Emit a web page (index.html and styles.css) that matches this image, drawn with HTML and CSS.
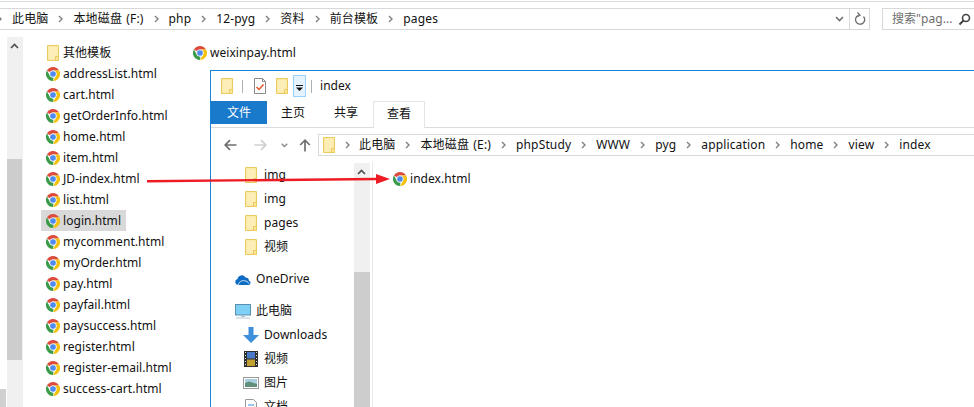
FILE: index.html
```html
<!DOCTYPE html>
<html lang="zh-CN">
<head>
<meta charset="utf-8">
<title>pages</title>
<link rel="stylesheet" href="styles.css">
</head>
<body>
<svg class="defs" width="0" height="0" aria-hidden="true">
  <symbol id="chrome" viewBox="0.5 0.5 15 15">
    <path d="M8 0.5a7.5 7.5 0 0 1 6.500 3.750H8a3.750 3.750 0 0 0-3.250 1.880L1.500 4.250A7.500 7.500 0 0 1 8 0.500z" fill="#dd4b3e"/>
    <path d="M14.500 4.250A7.500 7.500 0 0 1 8 15.500l3.250-5.630A3.750 3.750 0 0 0 8 4.250z" fill="#f4c20d"/>
    <path d="M1.500 4.250l3.250 5.620A3.750 3.750 0 0 0 8.500 11.700L8 15.500A7.500 7.500 0 0 1 1.500 4.250z" fill="#3a9b4a"/>
    <circle cx="8" cy="8" r="3.800" fill="#f2f2f2"/>
    <circle cx="8" cy="8" r="3" fill="#4d8bf0"/>
  </symbol>
  <symbol id="folder" viewBox="0 0 12 16">
    <path d="M.5.5h11v15H.5z" fill="#fde59a" stroke="#eccb5e"/>
    <path d="M1.500 1.500h9v10h-1.500v3H1.500z" fill="#fdeeb8"/>
    <path d="M8.500 15.500v-4h3" fill="none" stroke="#eccb5e"/>
  </symbol>
  <symbol id="chev" viewBox="0 0 5 8">
    <path d="M1 1l3 3-3 3" fill="none" stroke="#808080" stroke-width="1.400"/>
  </symbol>
</svg>

<div class="app">
  <div class="topline"></div>
  <div class="toolbar">
    <div class="address">
      <svg class="chev edge"><use href="#chev"/></svg>
      <span class="crumb first">此电脑</span><svg class="chev"><use href="#chev"/></svg>
      <span class="crumb">本地磁盘 (F:)</span><svg class="chev"><use href="#chev"/></svg>
      <span class="crumb">php</span><svg class="chev"><use href="#chev"/></svg>
      <span class="crumb">12-pyg</span><svg class="chev"><use href="#chev"/></svg>
      <span class="crumb">资料</span><svg class="chev"><use href="#chev"/></svg>
      <span class="crumb">前台模板</span><svg class="chev"><use href="#chev"/></svg>
      <span class="crumb">pages</span>
      <span class="address-tail">
        <svg class="drop" viewBox="0 0 9 6"><path d="M1 1l3.500 3.500L8 1" fill="none" stroke="#707070" stroke-width="1.600"/></svg>
        <span class="refresh">
          <svg viewBox="0 0 12 14" width="12" height="14"><path d="M9.500 4.500a4.600 4.600 0 1 1-5-1.200" fill="none" stroke="#6b6b6b" stroke-width="1.300"/><path d="M3.500 0.500l2.500 2.800-3 1.500" fill="none" stroke="#6b6b6b" stroke-width="1.200"/></svg>
        </span>
      </span>
    </div>
    <div class="search">
      <span>搜索"pag...</span>
      <svg viewBox="0 0 13 13" width="13" height="13"><circle cx="8" cy="5" r="3.500" fill="none" stroke="#444" stroke-width="1.600"/><path d="M5.500 7.500L1.500 11.500" stroke="#444" stroke-width="2"/></svg>
    </div>
  </div>

  <div class="main">
    <div class="sidebar-edge"></div>
    <div class="scrollbar outer">
      <svg class="scroll-up" viewBox="0 0 9 6"><path d="M1 5l3.500-3.500L8 5" fill="none" stroke="#505050" stroke-width="1.700"/></svg>
      <div class="thumb outer-thumb"></div>
    </div>
    <div class="files first-col">
      <div class="file"><svg class="ic-folder"><use href="#folder"/></svg>其他模板</div>
      <div class="file"><svg class="ic-chrome"><use href="#chrome"/></svg>addressList.html</div>
      <div class="file"><svg class="ic-chrome"><use href="#chrome"/></svg>cart.html</div>
      <div class="file"><svg class="ic-chrome"><use href="#chrome"/></svg>getOrderInfo.html</div>
      <div class="file"><svg class="ic-chrome"><use href="#chrome"/></svg>home.html</div>
      <div class="file"><svg class="ic-chrome"><use href="#chrome"/></svg>item.html</div>
      <div class="file"><svg class="ic-chrome"><use href="#chrome"/></svg>JD-index.html</div>
      <div class="file"><svg class="ic-chrome"><use href="#chrome"/></svg>list.html</div>
      <div class="file selected"><svg class="ic-chrome"><use href="#chrome"/></svg>login.html</div>
      <div class="file"><svg class="ic-chrome"><use href="#chrome"/></svg>mycomment.html</div>
      <div class="file"><svg class="ic-chrome"><use href="#chrome"/></svg>myOrder.html</div>
      <div class="file"><svg class="ic-chrome"><use href="#chrome"/></svg>pay.html</div>
      <div class="file"><svg class="ic-chrome"><use href="#chrome"/></svg>payfail.html</div>
      <div class="file"><svg class="ic-chrome"><use href="#chrome"/></svg>paysuccess.html</div>
      <div class="file"><svg class="ic-chrome"><use href="#chrome"/></svg>register.html</div>
      <div class="file"><svg class="ic-chrome"><use href="#chrome"/></svg>register-email.html</div>
      <div class="file"><svg class="ic-chrome"><use href="#chrome"/></svg>success-cart.html</div>
    </div>
    <div class="files">
      <div class="file"><svg class="ic-chrome"><use href="#chrome"/></svg>weixinpay.html</div>
    </div>
  </div>
  <div class="corner"></div>

  <section class="window">
    <div class="qat">
      <svg class="qat-folder"><use href="#folder"/></svg>
      <i class="qat-sep"></i>
      <svg class="qat-doc" viewBox="0 0 12 16"><path d="M.5.500h8l3 3v12H.5z" fill="#fff" stroke="#8a8a8a"/><path d="M8.500.500v3h3" fill="none" stroke="#8a8a8a"/><path d="M2.500 9l2.500 2.500L9.500 6.500" fill="none" stroke="#e8562a" stroke-width="1.500"/></svg>
      <svg class="qat-folder"><use href="#folder"/></svg>
      <span class="qat-btn"><svg viewBox="0 0 7 6" width="7" height="6"><path d="M0 0h7v1H0zM0 2.500h7L3.500 6z" fill="#111"/></svg></span>
      <i class="qat-sep tight"></i>
      <span class="qat-title">index</span>
    </div>
    <div class="tabs">
      <span class="tab tab-file">文件</span>
      <span class="tab tab-home">主页</span>
      <span class="tab tab-share">共享</span>
      <span class="tab tab-view">查看</span>
    </div>
    <div class="navrow">
      <svg class="nav-ic" viewBox="0 0 13 12"><path d="M12.500 6H1.500M6 1.200L1.200 6 6 10.800" fill="none" stroke="#6f6f6f" stroke-width="1.700"/></svg>
      <svg class="nav-ic fwd" viewBox="0 0 13 12"><path d="M.5 6h11M7 1.200L11.800 6 7 10.800" fill="none" stroke="#cfcfcf" stroke-width="1.700"/></svg>
      <svg class="nav-down" viewBox="0 0 7 5"><path d="M.7.700l2.800 2.800L6.300.7" fill="none" stroke="#8a8a8a" stroke-width="1.300"/></svg>
      <svg class="nav-up" viewBox="0 0 12 13"><path d="M6 12.500V1.500M1.200 6L6 1.200 10.800 6" fill="none" stroke="#6f6f6f" stroke-width="1.700"/></svg>
      <div class="inner-address">
        <svg class="addr-folder"><use href="#folder"/></svg>
        <svg class="chev gap-a"><use href="#chev"/></svg>
        <span class="crumb">此电脑</span><svg class="chev"><use href="#chev"/></svg>
        <span class="crumb">本地磁盘 (E:)</span><svg class="chev"><use href="#chev"/></svg>
        <span class="crumb">phpStudy</span><svg class="chev"><use href="#chev"/></svg>
        <span class="crumb">WWW</span><svg class="chev"><use href="#chev"/></svg>
        <span class="crumb">pyg</span><svg class="chev"><use href="#chev"/></svg>
        <span class="crumb">application</span><svg class="chev"><use href="#chev"/></svg>
        <span class="crumb">home</span><svg class="chev"><use href="#chev"/></svg>
        <span class="crumb">view</span><svg class="chev"><use href="#chev"/></svg>
        <span class="crumb">index</span>
      </div>
    </div>
    <div class="panes">
      <nav class="tree">
        <div class="node child"><svg class="ic-folder"><use href="#folder"/></svg>img</div>
        <div class="node child"><svg class="ic-folder"><use href="#folder"/></svg>img</div>
        <div class="node child"><svg class="ic-folder"><use href="#folder"/></svg>pages</div>
        <div class="node child"><svg class="ic-folder"><use href="#folder"/></svg>视频</div>
        <div class="node root">
          <svg class="ic-root" viewBox="0 0 16 12"><path d="M3 11.500a3 3 0 0 1-.5-5.900 4.300 4.300 0 0 1 8-1.600 3.500 3.500 0 0 1 3.500 3.200 2.200 2.200 0 0 1-.5 4.300z" fill="#0f6cc4"/><path d="M3 11.500c1-3 4-5 6.500-4.300 2 .5 3.500 1 4.500 3" fill="none" stroke="#fff" stroke-width=".8"/></svg>OneDrive
        </div>
        <div class="node root">
          <svg class="ic-root" viewBox="0 0 16 15"><rect x=".5" y=".5" width="15" height="10.500" fill="#7ed0f5" stroke="#5b8fae"/><path d="M6 11h4v2H6z" fill="#a9c4d4"/><path d="M1 13.500h14v1H1z" fill="#b5c7d3"/></svg>此电脑
        </div>
        <div class="node child">
          <svg class="ic-sub" viewBox="0 0 16 16"><path d="M5.500 0h5v8H16l-8 8-8-8h5.500z" fill="#3d8fdc"/></svg>Downloads
        </div>
        <div class="node child">
          <svg class="ic-sub" viewBox="0 0 16 16"><rect x="1" y="0" width="14" height="16" fill="#2f2f2f"/><path d="M4 1h8v6.500H4z" fill="#4a78c8"/><path d="M4 8.500h8V15H4z" fill="#c0a030"/><path d="M2 1.500h1M2 4.500h1M2 7.500h1M2 10.500h1M2 13.500h1M13 1.500h1M13 4.500h1M13 7.500h1M13 10.500h1M13 13.500h1" stroke="#ddd"/></svg>视频
        </div>
        <div class="node child">
          <svg class="ic-sub" viewBox="0 0 16 12"><rect x=".5" y=".5" width="15" height="11" fill="#fff" stroke="#9a9a9a"/><path d="M2 2h12v5H2z" fill="#a8cfe0"/><path d="M2 6l4-1.500L14 7v3H2z" fill="#5f8f78"/></svg>图片
        </div>
        <div class="node child">
          <svg class="ic-sub" viewBox="0 0 16 16"><path d="M2.500.500h8l3 3v12h-11z" fill="#fff" stroke="#9a9a9a"/><path d="M5 6h6M5 8.500h6M5 11h6" stroke="#3d8fdc"/></svg>文档
        </div>
      </nav>
      <div class="scrollbar inner">
        <svg class="scroll-up" viewBox="0 0 9 6"><path d="M1 5l3.500-3.500L8 5" fill="none" stroke="#505050" stroke-width="1.700"/></svg>
        <div class="thumb inner-thumb"></div>
      </div>
      <div class="content">
        <div class="file"><svg class="ic-chrome"><use href="#chrome"/></svg>index.html</div>
      </div>
    </div>
  </section>

  <svg class="arrow" viewBox="0 0 244 14" width="244" height="14">
    <path d="M0 9.200L230 7" fill="none" stroke="#ed1c24" stroke-width="2.400"/>
    <path d="M229 2l14 5-14 5z" fill="#ed1c24"/>
  </svg>
</div>
</body>
</html>
```

FILE: styles.css
```css
* { box-sizing: border-box; }
html, body { margin: 0; padding: 0; background: #fff; }
.defs { position: absolute; }
.app {
  position: relative;
  width: 974px;
  height: 407px;
  overflow: hidden;
  background: #fff;
  color: #111;
  font: 12px/16px "Noto Sans", "Noto Sans CJK SC", sans-serif;
  letter-spacing: .05px;
}
svg { display: block; flex: none; }

.topline { height: 1px; margin-top: 1px; background: #dcdcdc; }

.toolbar { display: flex; margin-top: 6px; height: 22px; }
.address {
  display: flex;
  align-items: center;
  width: 870px;
  border: 1px solid #d9d9d9;
  border-left: 0;
}
.chev { width: 5px; height: 8px; margin: 0 10px; }
.chev.edge { margin: 0 0 0 -3px; }
.crumb { white-space: nowrap; word-spacing: 1px; letter-spacing: .15px; }
.crumb.first { margin-left: 10px; }
.address-tail { margin-left: auto; display: flex; align-items: center; height: 100%; }
.drop { width: 9px; height: 6px; margin-right: 5px; }
.refresh {
  display: flex;
  align-items: center;
  justify-content: center;
  width: 20px;
  height: 100%;
  border-left: 1px solid #d9d9d9;
}
.search {
  display: flex;
  align-items: center;
  justify-content: space-between;
  width: 92px;
  margin-left: 12px;
  padding: 0 3px 0 9px;
  border: 1px solid #d9d9d9;
  border-right: 0;
  color: #6d6d6d;
}

.main { display: flex; margin-top: 7px; height: 370px; }
.sidebar-edge { width: 7px; }
.scrollbar { position: relative; flex: none; width: 16px; background: #f0f0f0; }
.scroll-up { position: absolute; left: 3px; top: 6px; width: 9px; height: 6px; }
.thumb { position: absolute; left: 0; right: 1px; background: #cdcdcd; }
.outer-thumb { top: 122px; height: 201px; }
.files { margin-top: 5px; }
.first-col { width: 147px; margin-left: 18px; }
.file {
  display: flex;
  align-items: center;
  height: 21px;
  width: 85px;
  white-space: nowrap;
}
.file.selected { background: #d9d9d9; }
.ic-chrome { width: 14px; height: 14px; margin: 0 3px 0 5px; }
.ic-folder { width: 12px; height: 16px; margin: 0 4px 0 6px; }
.corner {
  position: absolute;
  left: 0;
  top: 389px;
  width: 6px;
  height: 18px;
  background: #d0d0d0;
}

.window {
  position: absolute;
  left: 210px;
  top: 70px;
  right: 0;
  bottom: 0;
  display: flex;
  flex-direction: column;
  background: #fff;
  border-top: 1px solid #1883d7;
  border-left: 1px solid #1883d7;
}
.qat { display: flex; flex: none; align-items: center; height: 30px; }
.qat-folder { width: 12px; height: 16px; margin-left: 10px; }
.qat-sep { width: 1px; height: 13px; margin-left: 9px; background: #b0b0b0; }
.qat-sep.tight { margin-left: 5px; }
.qat-doc { width: 12px; height: 16px; margin-left: 11px; }
.qat-btn {
  display: flex;
  align-items: center;
  justify-content: center;
  width: 13px;
  height: 22px;
  margin-left: 5px;
  padding-top: 3px;
  background: #e5f3ff;
  border: 1px solid #99d1ff;
}
.qat-title { margin-left: 8px; }

.tabs {
  display: flex;
  flex: none;
  align-items: flex-start;
  height: 27px;
  border-bottom: 1px solid #dadbdc;
}
.tab {
  display: flex;
  align-items: center;
  justify-content: center;
  height: 23px;
}
.tab-file { width: 56px; background: #1979ca; color: #fff; }
.tab-home { width: 52px; }
.tab-share { width: 54px; }
.tab-view {
  width: 52px;
  height: 27px;
  background: #fff;
  border: 1px solid #e4e4e4;
  border-bottom: 0;
  padding-bottom: 2px;
}

.navrow { display: flex; flex: none; align-items: center; height: 34px; padding: 2px 0; }
.nav-ic { width: 13px; height: 12px; margin-left: 13px; }
.nav-ic.fwd { margin-left: 17px; }
.nav-down { width: 7px; height: 5px; margin-left: 14px; }
.nav-up { width: 12px; height: 13px; margin-left: 11px; }
.inner-address {
  display: flex;
  align-items: center;
  flex: 1;
  height: 22px;
  margin-left: 7px;
  padding-left: 4px;
  border: 1px solid #d9d9d9;
  border-right: 0;
}
.addr-folder { width: 12px; height: 16px; }
.inner-address .chev.gap-a { margin-left: 10px; margin-right: 9px; }

.panes { display: flex; flex: 1; min-height: 0; }
.tree { width: 143px; padding-top: 1px; }
.node { display: flex; align-items: center; height: 24px; white-space: nowrap; }
.node.child { padding-left: 33px; }
.node.root { padding-left: 24px; }
.node.root:nth-child(5) { margin-top: 8px; }
.node.root:nth-child(6) { margin-top: 8px; }
.node .ic-folder { margin: 0 7px 0 1px; }
.ic-root { width: 16px; height: 15px; margin-right: 5px; }
.ic-sub { width: 16px; height: 16px; margin: 0 5px 0 -1px; }
.scrollbar.inner { margin-top: 1px; }
.inner-thumb { top: 109px; bottom: 0; right: 0; }
.content { flex: 1; margin-left: 2px; padding: 7px 0 0 20px; border-left: 1px solid #eaeaea; }
.content .file { width: auto; height: 20px; }
.content .ic-chrome { margin: 0 3px 0 0; }

.arrow { position: absolute; left: 147px; top: 172px; }
```
